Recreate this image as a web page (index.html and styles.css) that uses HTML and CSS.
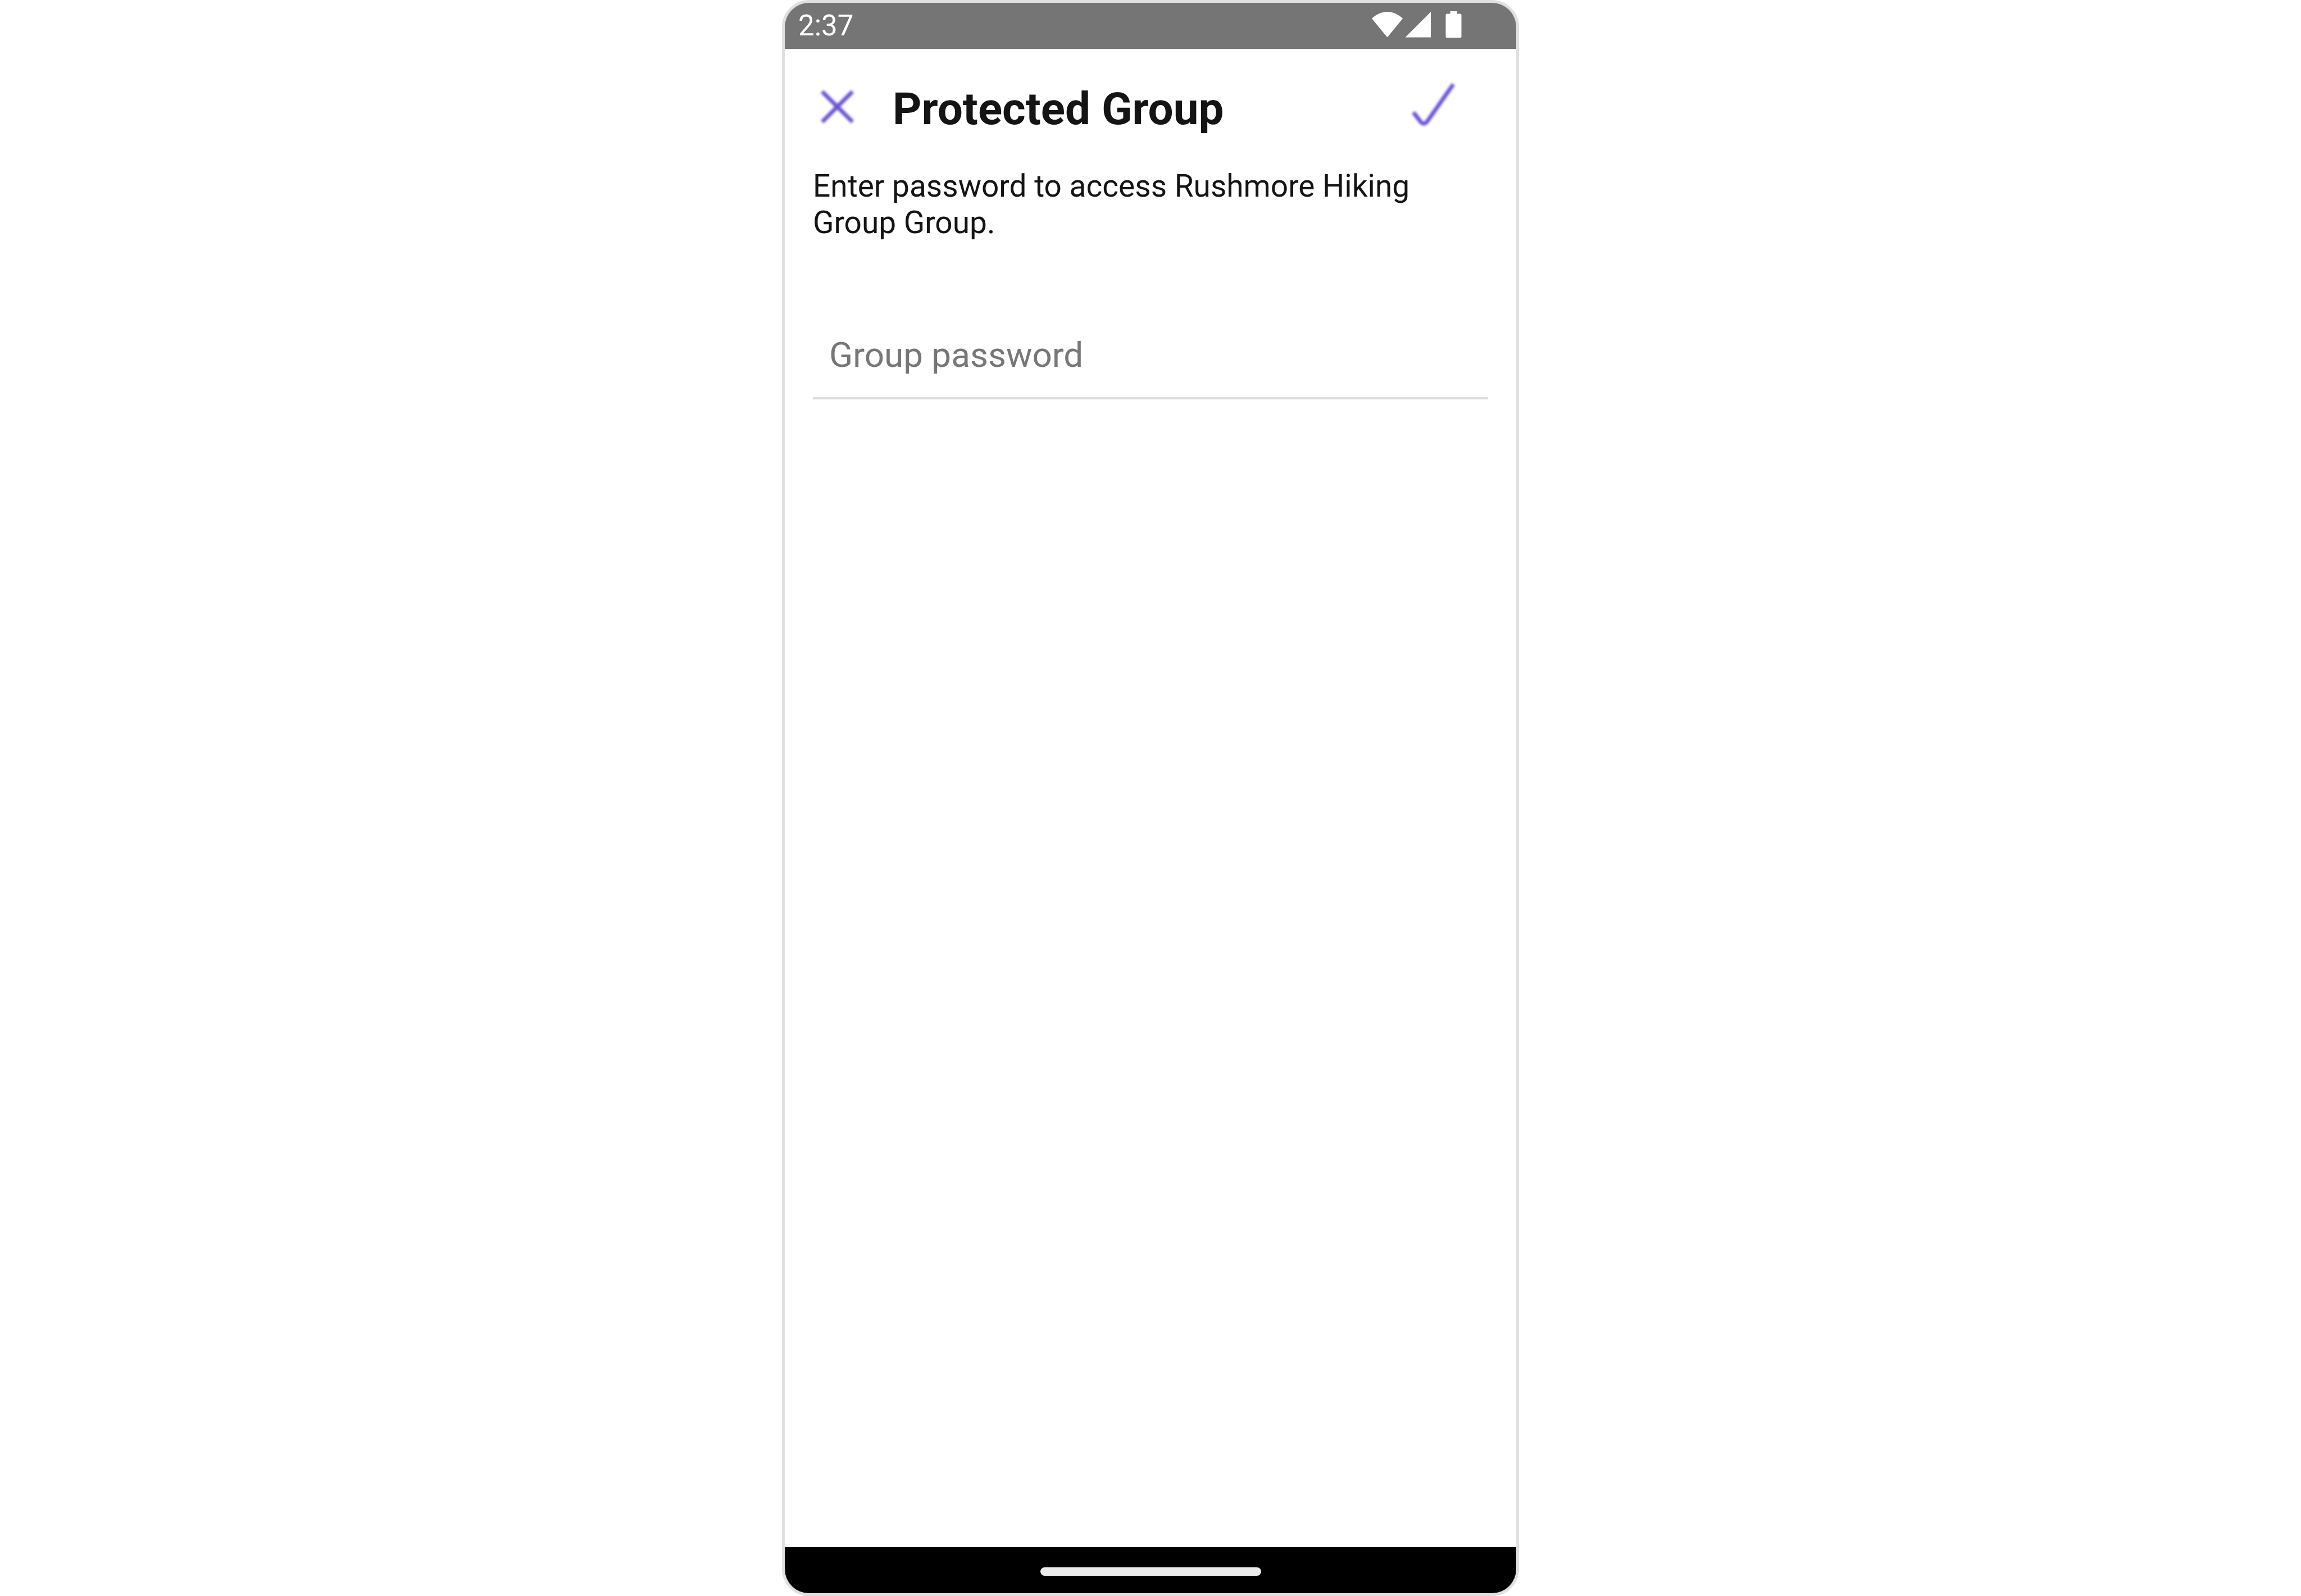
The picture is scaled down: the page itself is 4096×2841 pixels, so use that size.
FILE: index.html
```html
<!DOCTYPE html>
<html lang="en">
<head>
<meta charset="utf-8">
<meta name="viewport" content="width=device-width, initial-scale=1">
<title>Protected Group</title>
<link rel="stylesheet" href="styles.css">
</head>
<body>
<div class="phone">
  <div class="status-bar">
    <time class="status-time">2:37</time>
    <svg class="status-icons" viewBox="0 0 160 60" aria-hidden="true">
      <path d="M0 17C7 10 16.500 5 27.500 5S48 10 55 17L27.500 50.500Z"/>
      <path d="M59.500 50.500L105 5V50.500Z"/>
      <path d="M139.600 4h12v4.600h5.400a2.500 2.500 0 0 1 2.500 2.500v37.700a2.500 2.500 0 0 1-2.500 2.500h-23a2.500 2.500 0 0 1-2.500-2.500V11.100a2.500 2.500 0 0 1 2.500-2.500h5.600Z"/>
    </svg>
  </div>
  <form class="screen">
    <header class="header">
      <button class="icon-button" type="button" aria-label="Close">
        <svg class="icon" viewBox="0 0 88 88"><path d="M16.500 17L70.500 71M70.500 17L16.500 71"/></svg>
      </button>
      <h1 class="title">Protected Group</h1>
      <button class="icon-button" type="submit" aria-label="Join">
        <svg class="icon" viewBox="0 0 88 88"><path d="M7 54L20 71Q25.500 77 31 71L78 4"/></svg>
      </button>
    </header>
    <main class="content">
      <label class="description" for="password">Enter password to access Rushmore Hiking Group Group.</label>
      <input class="password" id="password" type="password" placeholder="Group password">
    </main>
  </form>
  <div class="nav-bar"><div class="nav-handle"></div></div>
</div>
</body>
</html>
```
FILE: styles.css
```css
* {
  box-sizing: border-box;
}

body {
  margin: 0;
  background: #fff;
  color: #141414;
  font-family: Roboto, "Liberation Sans", sans-serif;
}

.phone {
  display: flex;
  flex-direction: column;
  max-width: 1312px;
  min-height: 100vh;
  margin: 0 auto;
  border: 5px solid #e0e0e0;
  border-radius: 48px;
  overflow: hidden;
}

.status-bar {
  display: flex;
  align-items: center;
  justify-content: space-between;
  height: 82px;
  padding: 0 97px 0 24px;
  background: #757575;
  color: #fff;
}

.status-time {
  font-size: 51px;
  line-height: 60px;
}

.status-icons {
  width: 160px;
  height: 60px;
  fill: currentColor;
}

.screen {
  flex: 1;
}

.header {
  display: flex;
  align-items: flex-start;
  padding: 59px 102px 57px 50px;
}

.icon-button {
  flex: none;
  width: 88px;
  height: 88px;
  padding: 0;
  border: 0;
  background: none;
  color: #6a4fd8;
}

.icon {
  display: block;
  width: 100%;
  height: 100%;
  overflow: visible;
  fill: none;
  stroke: currentColor;
  stroke-width: 7;
  filter: blur(2px);
}

.title {
  flex: 1;
  margin: 0 54px;
  font-size: 80px;
  font-weight: 700;
  line-height: 96px;
}

.content {
  padding: 0 50px;
}

.description {
  display: block;
  font-size: 55px;
  line-height: 65px;
}

.password {
  display: block;
  width: 100%;
  height: 156px;
  margin-top: 126px;
  padding: 40px 29px;
  border: 0;
  border-bottom: 4px solid #ddd;
  outline: 0;
  background: none;
  color: inherit;
  font: inherit;
  font-size: 62px;
  line-height: 72px;
}

.password::placeholder {
  color: #777;
  opacity: 1;
}

.nav-bar {
  height: 82px;
  padding-top: 36px;
  background: #000;
}

.nav-handle {
  width: 393px;
  height: 15px;
  margin: 0 auto;
  border-radius: 8px;
  background: #ebebeb;
}
```
